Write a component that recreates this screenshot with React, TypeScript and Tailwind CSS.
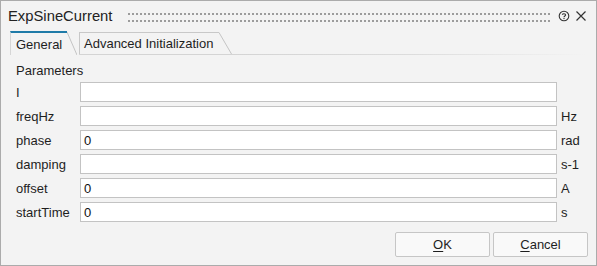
import React from "react";

const rows: { label: string; value: string; unit: string }[] = [
  { label: "I", value: "", unit: "" },
  { label: "freqHz", value: "", unit: "Hz" },
  { label: "phase", value: "0", unit: "rad" },
  { label: "damping", value: "", unit: "s-1" },
  { label: "offset", value: "0", unit: "A" },
  { label: "startTime", value: "0", unit: "s" },
];

export default function App() {
  return (
    <div
      className="w-[597px] h-[266px] border border-[#ababab] bg-[#f3f3f3] flex flex-col text-[#1e1e1e] overflow-hidden"
      style={{ fontFamily: '"Liberation Sans", Arial, sans-serif' }}
    >
      {/* Title bar */}
      <div className="h-[29px] flex items-center pl-[7px] pr-[9px]">
        <span className="text-[14.8px] leading-none pt-[2px] text-[#222]">ExpSineCurrent</span>
        <div className="ml-[16px] flex-1 h-[9px] mt-[4px] flex flex-col justify-between">
          <div className="h-[2px] bg-[linear-gradient(to_right,#9c9c9c_2px,transparent_2px)] bg-[length:4px_2px]" />
          <div className="h-[2px] bg-[linear-gradient(to_right,#9c9c9c_2px,transparent_2px)] bg-[length:4px_2px]" />
        </div>
        <svg width="12" height="12" viewBox="0 0 12 12" className="ml-[8px] mt-[1px]">
          <circle cx="6" cy="6" r="4.8" fill="none" stroke="#333" strokeWidth="1.1" />
          <path d="M4.4 4.8 C4.4 3.3 7.6 3.3 7.6 4.9 C7.6 6 6 6 6 7.2" fill="none" stroke="#333" strokeWidth="1.1" />
          <rect x="5.45" y="8" width="1.1" height="1.1" fill="#333" />
        </svg>
        <svg width="12" height="12" viewBox="0 0 12 12" className="ml-[5px] mt-[1px]">
          <path d="M1.5 1.5 L10.5 10.5 M10.5 1.5 L1.5 10.5" stroke="#333" strokeWidth="1.2" />
        </svg>
      </div>

      {/* Tabs */}
      <div className="h-[25px] flex items-end pl-[9px]">
        {/* General (active) */}
        <div className="flex h-[24px] items-stretch">
          <div className="w-[57px] border-t-2 border-[#1f7ba8] border-l border-l-[#d6d6d6] pl-[5px] text-[13px] flex items-center pt-[2px] bg-[#f3f3f3]">
            General
          </div>
          <svg width="10" height="24" className="block">
            <line x1="0" y1="1" x2="10" y2="24" stroke="#c4c4c4" strokeWidth="1" />
          </svg>
        </div>
        {/* Advanced */}
        <div className="flex h-[23px] items-stretch ml-[2px] border-b border-[#d4d4d4]">
          <div className="w-[140px] border-t border-l border-[#c8c8c8] pl-[4px] text-[13px] flex items-center pt-[1px]">
            Advanced Initialization
          </div>
          <svg width="13" height="22" className="block">
            <line x1="0" y1="0.5" x2="12.5" y2="22" stroke="#c4c4c4" strokeWidth="1" />
          </svg>
        </div>
        <div className="flex-1 h-px bg-gradient-to-r from-[#d4d4d4] via-[#dcdcdc] to-transparent mr-[10px]" />
      </div>

      {/* Body */}
      <div className="flex-1 flex flex-col pl-[15px] pr-[8px] pt-[8px] pb-[8px] text-[13px]">
        <div className="h-[16px] leading-[16px]">Parameters</div>
        <div className="mt-[3px] grid grid-cols-[64px_477px_1fr] gap-y-[4px]">
          {rows.map((r) => (
            <React.Fragment key={r.label}>
              <div className="h-[20px] flex items-center pt-[1px]">{r.label}</div>
              <div className="h-[20px] border border-[#c3c3c3] bg-white flex items-center pl-[3px] pt-[1px] text-[13px] text-[#111]">
                {r.value}
              </div>
              <div className="h-[20px] flex items-center pl-[4px] pt-[1px]">{r.unit}</div>
            </React.Fragment>
          ))}
        </div>
        <div className="flex-1" />
        <div className="flex justify-end gap-[3px]">
          <button className="w-[95px] h-[25px] border border-[#c6c6c6] rounded-[2px] bg-[#f9f9f9] text-[13px] text-[#1e1e1e]">
            <span className="underline underline-offset-2">O</span>K
          </button>
          <button className="w-[95px] h-[25px] border border-[#c6c6c6] rounded-[2px] bg-[#f9f9f9] text-[13px] text-[#1e1e1e]">
            <span className="underline underline-offset-2">C</span>ancel
          </button>
        </div>
      </div>
    </div>
  );
}
